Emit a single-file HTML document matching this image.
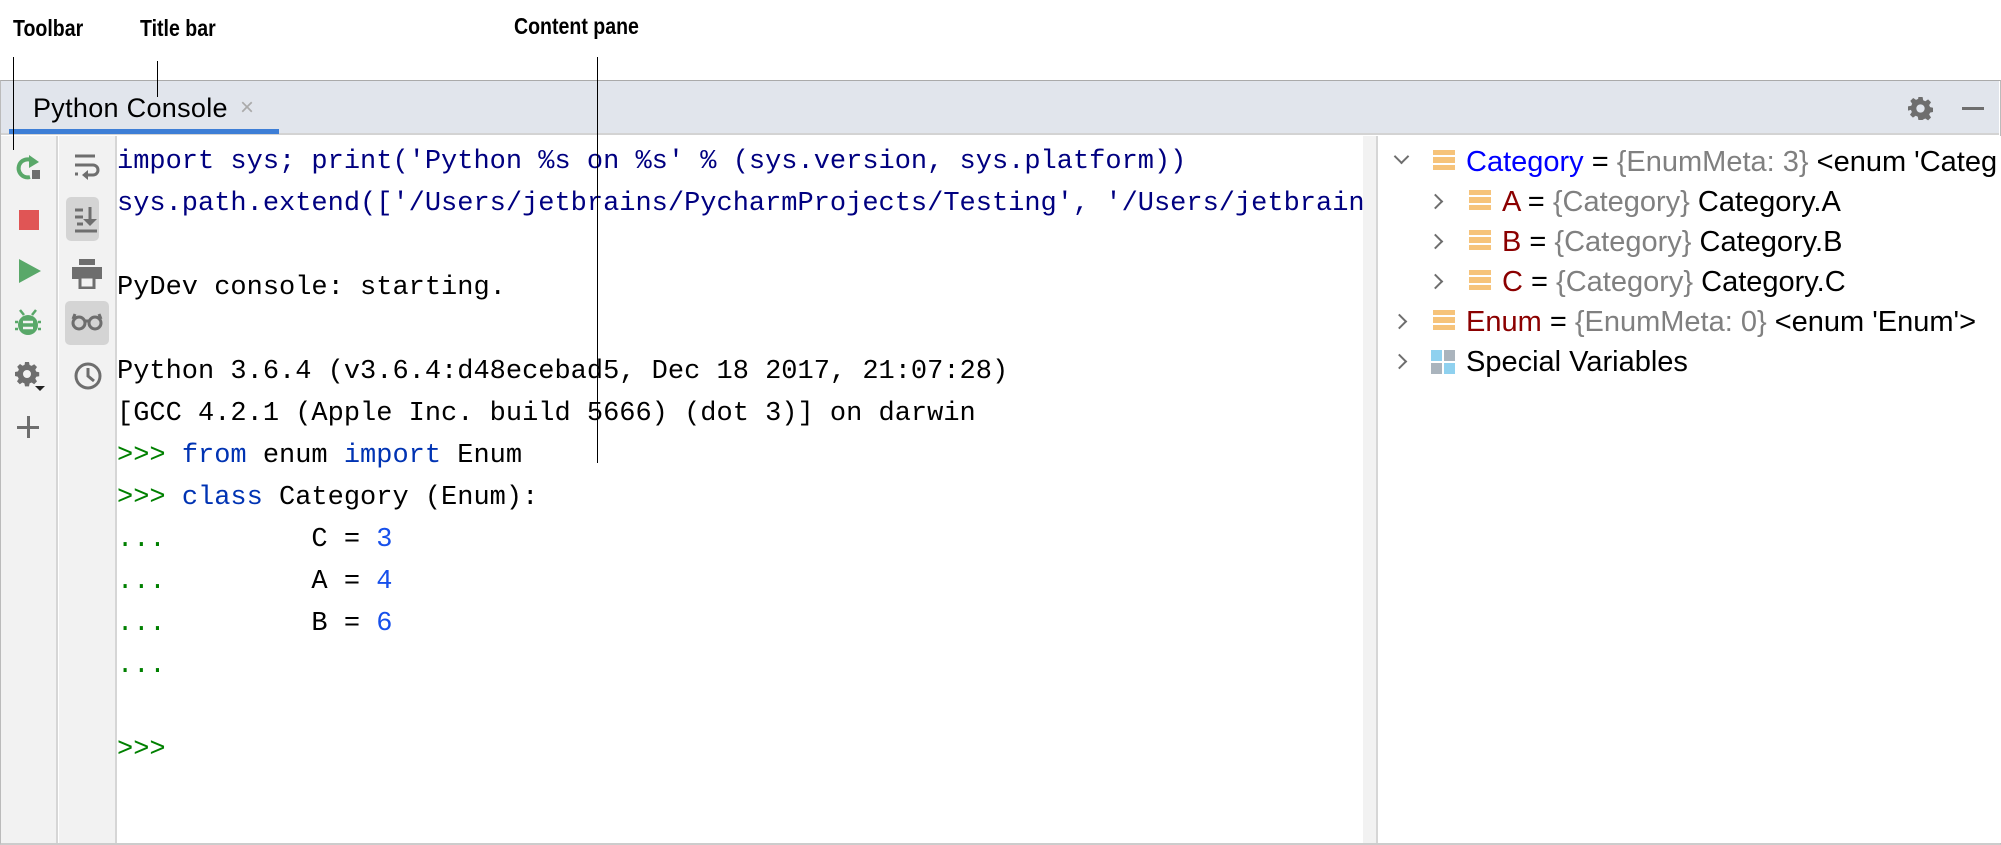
<!DOCTYPE html>
<html><head><meta charset="utf-8"><style>
*{margin:0;padding:0;box-sizing:border-box}
body{width:2001px;height:845px;background:#fff;position:relative;overflow:hidden;font-family:"Liberation Sans",sans-serif}
.a{position:absolute}
.lbl{font-weight:bold;font-size:23px;color:#000;transform:scaleX(.85);transform-origin:left top}
.vl{position:absolute;width:1px;background:#000}
.code{position:absolute;left:117px;font-family:"Liberation Mono",monospace;font-size:27px;line-height:42px;white-space:pre;color:#000}
.n{color:#000080}.k{color:#0033b3}.g{color:#008000}.num{color:#1750eb}
.var{position:absolute;font-size:29px;line-height:40px;white-space:nowrap;color:#000}
.gr{color:#808080}.bl{color:#0000ff}.rd{color:#8b0000}
.chev{position:absolute;width:11px;height:11px;border-right:2px solid #6e6e6e;border-bottom:2px solid #6e6e6e}
.ic{position:absolute;width:22px;height:20px;background:linear-gradient(#f6c37a 0 5px,#fff 5px 7px,#f6c37a 7px 13px,#fff 13px 15px,#f6c37a 15px)}
</style></head><body>
<div class="a lbl" style="left:13px;top:15px">Toolbar</div>
<div class="a lbl" style="left:140px;top:15px">Title bar</div>
<div class="a lbl" style="left:514px;top:13px">Content pane</div>

<div class="a" style="left:0;top:80px;width:2001px;height:765px;border-top:1px solid #aaa;border-left:1px solid #bbb;border-right:1px solid #bbb;border-bottom:2px solid #ccc"></div>
<div class="a" style="left:1px;top:81px;width:1998px;height:54px;background:#e1e5ec;border-bottom:2px solid #d3d3d3"></div>
<div class="a" style="left:33px;top:93px;font-size:27px;color:#000;letter-spacing:.3px">Python Console</div>
<div class="a" style="left:240px;top:94px;font-size:24px;color:#aaa">×</div>
<div class="a" style="left:9px;top:129px;width:270px;height:5px;background:#3d7ed6"></div>
<svg class="a" style="left:1908px;top:96px" width="25" height="25" viewBox="0 0 24 24"><path fill="#6e6e6e" d="M10 1h4l.6 3.1 2 .9 2.7-1.8 2.8 2.8-1.8 2.7.9 2 3.1.6v4l-3.1.6-.9 2 1.8 2.7-2.8 2.8-2.7-1.8-2 .9L14 23h-4l-.6-3.1-2-.9-2.7 1.8-2.8-2.8 1.8-2.7-.9-2L0 14v-4l3.1-.6.9-2-1.8-2.7 2.8-2.8 2.7 1.8 2-.9z M12 8a4 4 0 100 8 4 4 0 000-8z" fill-rule="evenodd"/></svg>
<div class="a" style="left:1962px;top:107px;width:22px;height:3px;background:#6e6e6e"></div>

<div class="a" style="left:1px;top:136px;width:57px;height:707px;background:#f2f2f2;border-right:2px solid #d6d6d6"></div>
<div class="a" style="left:59px;top:136px;width:58px;height:707px;background:#f2f2f2;border-right:2px solid #d6d6d6"></div>

<svg class="a" style="left:14px;top:153px" width="28" height="28" viewBox="0 0 28 28"><path d="M20 9a9 9 0 1 0 -4 15" fill="none" stroke="#59a869" stroke-width="4"/><path d="M15 2l10 7-10 6z" fill="#59a869"/><rect x="18" y="17" width="8" height="9" fill="#6e6e6e"/></svg>
<div class="a" style="left:19px;top:210px;width:20px;height:20px;background:#e05555"></div>
<svg class="a" style="left:19px;top:259px" width="22" height="24"><path d="M0 0L22 12 0 24z" fill="#59a869"/></svg>
<svg class="a" style="left:15px;top:308px" width="26" height="28" viewBox="0 0 26 28"><ellipse cx="13" cy="17" rx="10" ry="10" fill="#59a869"/><path d="M5 2l4 5M21 2l-4 5M3 14H0M26 14h-3M3 21H0M26 21h-3" stroke="#59a869" stroke-width="2.5"/><path d="M8 14h10M8 20h10" stroke="#f2f2f2" stroke-width="2.5"/></svg>
<svg class="a" style="left:15px;top:362px" width="32" height="30" viewBox="0 0 32 30"><path fill="#6e6e6e" fill-rule="evenodd" d="M10 0h4l.6 3 2 .9 2.6-1.7 2.8 2.8-1.7 2.6.9 2 3 .6v4l-3 .6-.9 2 1.7 2.6-2.8 2.8-2.6-1.7-2 .9-.6 3h-4l-.6-3-2-.9-2.6 1.7-2.8-2.8 1.7-2.6-.9-2L0 14v-4l3-.6.9-2L2.2 4.8 5 2l2.6 1.7 2-.9z M12 8a4 4 0 100 8 4 4 0 000-8z"/><path d="M20 24h10l-5 5z" fill="#222"/></svg>
<div class="a" style="left:17px;top:426px;width:22px;height:3px;background:#6e6e6e"></div>
<div class="a" style="left:27px;top:416px;width:3px;height:22px;background:#6e6e6e"></div>

<svg class="a" style="left:74px;top:153px" width="26" height="28" viewBox="0 0 26 28"><path d="M1 3h20M1 12h18a5 5 0 0 1 0 10h-7M1 21h3" stroke="#6e6e6e" stroke-width="3" fill="none"/><path d="M14 17v10l-6-5z" fill="#6e6e6e"/></svg>
<div class="a" style="left:66px;top:197px;width:33px;height:44px;background:#d4d4d4;border-radius:5px"></div>
<svg class="a" style="left:74px;top:205px" width="28" height="28" viewBox="0 0 28 28"><path d="M1 5h8M1 12h8M3 19h6M1 26h22M16 2v16" stroke="#6e6e6e" stroke-width="3"/><path d="M9 14h14l-7 7z" fill="#6e6e6e"/></svg>
<svg class="a" style="left:72px;top:259px" width="30" height="30" viewBox="0 0 30 30"><rect x="7" y="0" width="16" height="6" fill="#6e6e6e"/><rect x="0" y="8" width="30" height="12" fill="#6e6e6e"/><rect x="8" y="18" width="14" height="11" fill="#f2f2f2" stroke="#6e6e6e" stroke-width="3"/></svg>
<div class="a" style="left:65px;top:301px;width:44px;height:44px;background:#d4d4d4;border-radius:5px"></div>
<svg class="a" style="left:71px;top:313px" width="32" height="18" viewBox="0 0 32 18"><circle cx="8" cy="10" r="6" fill="none" stroke="#6e6e6e" stroke-width="3"/><circle cx="24" cy="10" r="6" fill="none" stroke="#6e6e6e" stroke-width="3"/><path d="M14 8h4M2 6L4 1M30 6l-2-5" stroke="#6e6e6e" stroke-width="3"/></svg>
<svg class="a" style="left:73px;top:361px" width="30" height="30" viewBox="0 0 30 30"><circle cx="15" cy="15" r="12" fill="none" stroke="#6e6e6e" stroke-width="3"/><path d="M15 7v8l6 5" fill="none" stroke="#6e6e6e" stroke-width="3"/></svg>

<div class="code" style="top:141px"><span class="n">import sys; print('Python %s on %s' % (sys.version, sys.platform))
sys.path.extend(['/Users/jetbrains/PycharmProjects/Testing', '/Users/jetbrains</span>

PyDev console: starting.

Python 3.6.4 (v3.6.4:d48ecebad5, Dec 18 2017, 21:07:28)
[GCC 4.2.1 (Apple Inc. build 5666) (dot 3)] on darwin
<span class="g">&gt;&gt;&gt;</span> <span class="k">from</span> enum <span class="k">import</span> Enum
<span class="g">&gt;&gt;&gt;</span> <span class="k">class</span> Category (Enum):
<span class="g">...</span>         C = <span class="num">3</span>
<span class="g">...</span>         A = <span class="num">4</span>
<span class="g">...</span>         B = <span class="num">6</span>
<span class="g">...</span>

<span class="g">&gt;&gt;&gt;</span></div>
<div class="a" style="left:1363px;top:136px;width:15px;height:707px;background:#f2f2f2;border-right:2px solid #d6d6d6"></div>
<div class="a" style="left:1378px;top:136px;width:620px;height:707px;background:#fff"></div>

<div class="chev" style="left:1396px;top:151px;transform:rotate(45deg)"></div>
<div class="ic" style="left:1433px;top:150px"></div>
<div class="var" style="left:1466px;top:142px"><span class="bl">Category</span> = <span class="gr">{EnumMeta: 3}</span> &lt;enum 'Category'&gt;</div>
<div class="a" style="left:1998px;top:136px;width:3px;height:707px;background:#fff"></div>

<div class="chev" style="left:1430px;top:196px;transform:rotate(-45deg)"></div>
<div class="ic" style="left:1469px;top:190px"></div>
<div class="var" style="left:1502px;top:182px"><span class="rd">A</span> = <span class="gr">{Category}</span> Category.A</div>
<div class="chev" style="left:1430px;top:236px;transform:rotate(-45deg)"></div>
<div class="ic" style="left:1469px;top:230px"></div>
<div class="var" style="left:1502px;top:222px"><span class="rd">B</span> = <span class="gr">{Category}</span> Category.B</div>
<div class="chev" style="left:1430px;top:276px;transform:rotate(-45deg)"></div>
<div class="ic" style="left:1469px;top:270px"></div>
<div class="var" style="left:1502px;top:262px"><span class="rd">C</span> = <span class="gr">{Category}</span> Category.C</div>
<div class="chev" style="left:1394px;top:316px;transform:rotate(-45deg)"></div>
<div class="ic" style="left:1433px;top:310px"></div>
<div class="var" style="left:1466px;top:302px"><span class="rd">Enum</span> = <span class="gr">{EnumMeta: 0}</span> &lt;enum 'Enum'&gt;</div>
<div class="chev" style="left:1394px;top:356px;transform:rotate(-45deg)"></div>
<svg class="a" style="left:1431px;top:350px" width="24" height="24"><rect x="0" y="0" width="11" height="11" fill="#8fd1ef"/><rect x="13" y="0" width="11" height="11" fill="#aab4bd"/><rect x="0" y="13" width="11" height="11" fill="#aab4bd"/><rect x="13" y="13" width="11" height="11" fill="#8fd1ef"/></svg>
<div class="var" style="left:1466px;top:342px">Special Variables</div>

<div class="vl" style="left:13px;top:57px;height:93px"></div>
<div class="vl" style="left:157px;top:61px;height:36px"></div>
<div class="vl" style="left:597px;top:57px;height:406px"></div>
</body></html>
